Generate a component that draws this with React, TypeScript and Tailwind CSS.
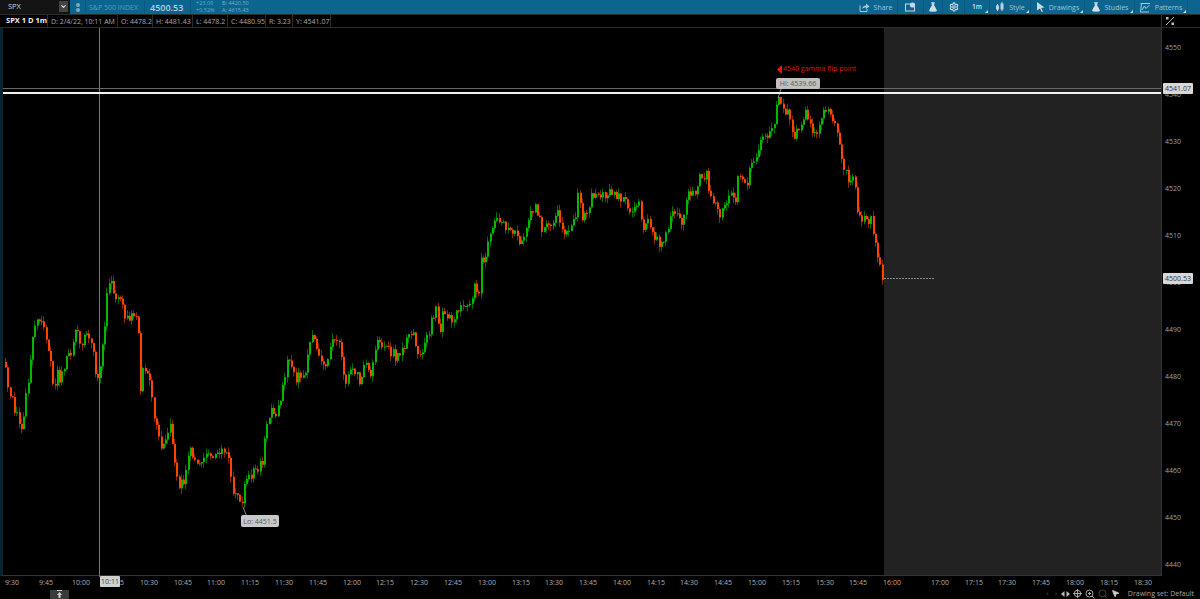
import React from "react";
import { Settings, FlaskConical, ChevronDown, MousePointer2 } from "lucide-react";

const PTS: [number, number][] = [
[5,365],[8,392],[15,410],[20,430],[24,405],[28,375],[32,335],[36,313],[42,325],[46,340],[50,365],[53,390],[57,372],[60,380],[68,350],[72,350],[76,325],[80,345],[86,335],[92,345],[96,385],[100,365],[104,330],[107,290],[110,283],[116,295],[120,295],[125,320],[130,320],[134,310],[138,330],[140,395],[143,368],[148,375],[152,405],[156,430],[160,450],[165,440],[170,425],[174,465],[178,485],[183,480],[190,450],[195,460],[200,465],[205,450],[212,455],[218,448],[224,452],[228,460],[232,495],[237,490],[242,505],[245,480],[250,475],[256,468],[262,460],[266,430],[270,405],[276,415],[283,387],[287,360],[295,377],[303,377],[312,333],[317,357],[323,370],[332,343],[337,335],[345,383],[352,367],[360,383],[365,360],[370,378],[377,337],[387,350],[397,358],[412,327],[418,360],[427,337],[435,308],[440,327],[443,313],[452,322],[455,307],[468,310],[473,288],[479,288],[480,258],[484,267],[488,233],[500,217],[510,235],[513,227],[518,245],[530,215],[535,205],[543,232],[557,215],[566,237],[575,215],[577,187],[581,217],[585,218],[592,195],[605,197],[613,192],[630,210],[638,200],[642,233],[647,222],[659,247],[673,212],[682,222],[689,190],[693,197],[700,173],[707,175],[709,195],[720,213],[730,193],[735,200],[738,175],[747,185],[750,158],[756,160],[760,143],[772,132],[777,102],[781,100],[790,122],[793,140],[805,112],[813,140],[818,123],[825,107],[828,108],[833,118],[840,153],[848,180],[853,177],[857,210],[865,223],[870,217],[875,247],[883,280]];

function interp(x: number) {
  for (let i = 1; i < PTS.length; i++) {
    if (x <= PTS[i][0]) {
      const [a, b] = PTS[i - 1], [c, d] = PTS[i];
      return b + ((d - b) * (x - a)) / (c - a);
    }
  }
  return 280;
}
function rnd(i: number) {
  const s = Math.sin(i * 127.1 + 11.7) * 43758.5453;
  return s - Math.floor(s);
}
const STEP = 2.2538;
const closeAt = (i: number) => interp(5 + i * STEP) + (rnd(i) - 0.5) * 11;
const candles = Array.from({ length: 390 }, (_, i) => {
  const x = 5 + i * STEP;
  const close = i === 389 ? 280 : closeAt(i);
  const prev = i === 0 ? 362 : closeAt(i - 1);
  const hi = Math.max(Math.min(close, prev) - rnd(i + 500) * 6, 97);
  const lo = Math.max(close, prev) + rnd(i + 900) * 6;
  return { x, close: Math.max(close, 97), prev: Math.max(prev, 97), hi, lo, up: close < prev };
});

const PRICES = [4550, 4540, 4530, 4520, 4510, 4500, 4490, 4480, 4470, 4460, 4450, 4440];
const TIMES: [string, number][] = [["9:30",12],["9:45",46],["10:00",81],["10:15",115],["10:30",149],["10:45",183],["11:00",216],["11:15",250],["11:30",284],["11:45",318],["12:00",352],["12:15",385],["12:30",419],["12:45",453],["13:00",487],["13:15",521],["13:30",554],["13:45",588],["14:00",622],["14:15",656],["14:30",689],["14:45",723],["15:00",757],["15:15",791],["15:30",825],["15:45",858],["16:00",892],["17:00",940],["17:15",974],["17:30",1007],["17:45",1041],["18:00",1075],["18:15",1109],["18:30",1143]];
const CELLS = [
  ["D: 2/4/22, 10:11 AM", 70],
  ["O: 4478.2", 35],
  ["H: 4481.43", 40],
  ["L: 4478.2", 35],
  ["C: 4480.95", 38],
  ["R: 3.23", 27],
  ["Y: 4541.07", 38],
] as const;

const Caret = () => <span className="absolute right-[1px] bottom-[1px] h-0 w-0 border-b-[3px] border-l-[3px] border-b-[#c8dbe5] border-l-transparent" />;

const Tool = ({ icon, label, w, caret = true }: { icon: React.ReactNode; label?: string; w: string; caret?: boolean }) => (
  <div className={`relative flex h-full items-center justify-center gap-[4px] border-r border-[#0a5a80] ${w}`}>
    {icon}
    {label && <span>{label}</span>}
    {caret && <Caret />}
  </div>
);

const ShareIcon = () => (
  <svg width="11" height="9" viewBox="0 0 11 9" fill="none" stroke="#a9c7d6" strokeWidth="1"><path d="M1 2.5V8.5H8V6" /><path d="M3 6C3.5 3.5 5.5 2.5 7 2.5V0.5L10.5 3.5L7 6V4.5C5.5 4.5 4 5 3 6Z" fill="#a9c7d6" stroke="none" /></svg>
);
const CalIcon = () => (
  <svg width="11" height="10" viewBox="0 0 11 10" fill="none" stroke="#c4d7e1" strokeWidth="1"><rect x="0.5" y="2" width="9" height="7" /><circle cx="7.5" cy="3" r="2.6" fill="#c4d7e1" stroke="none" /></svg>
);
const StyleIcon = () => (
  <svg width="10" height="10" viewBox="0 0 10 10" fill="#bcd2de"><rect x="1" y="3.5" width="3" height="4" /><rect x="2" y="2" width="1" height="7" /><rect x="5.5" y="1.5" width="3" height="6" /><rect x="6.5" y="0" width="1" height="9" /></svg>
);
const CursorIcon = ({ c = "#c8dbe5" }: { c?: string }) => (
  <svg width="9" height="10" viewBox="0 0 9 10" fill={c}><path d="M1 0L8.5 5.5L5.2 6L7 9.5L5.6 10L4 6.5L1 8.5Z" /></svg>
);
const PatternIcon = () => (
  <svg width="11" height="11" viewBox="0 0 11 11" fill="none" stroke="#bcd2de" strokeWidth="0.9"><path d="M0.5 1.5H10" /><path d="M1.5 1.5L0.5 10.5" /><path d="M2 8L4.5 4L6 6.5L9.5 3" /><path d="M1 10H9" /></svg>
);

export default function App() {
  return (
    <div className="relative flex h-[599px] w-[1200px] flex-col overflow-hidden bg-black text-[7px] leading-none text-[#c4c4c4] [font-family:'Open_Sans',sans-serif]">
      {/* top bar */}
      <div className="flex h-[14px] shrink-0 items-center bg-[#0c658e] text-[#a5c3d2]">
        <div className="relative flex h-full w-[70px] items-center bg-[#141414] pl-[8px] text-[7.5px] text-[#d0d0d0]">
          SPX
          <div className="absolute right-[2px] top-[1px] flex h-[11px] w-[9px] items-center justify-center bg-[#444]">
            <ChevronDown size={7} strokeWidth={4} color="#ddd" />
          </div>
        </div>
        <div className="flex h-full w-[15px] flex-col items-center justify-center gap-[1px]">
          <span className="h-[4px] w-[4px] rounded-full bg-[#7fa9bf]" />
          <span className="h-[4px] w-[4px] rounded-full bg-[#7fa9bf]" />
        </div>
        <div className="flex h-full w-[59px] items-center whitespace-nowrap border-l border-[#0a5a80] pl-[3px] text-[#4f9dbf]">S&amp;P 500 INDEX</div>
        <div className="flex h-full w-[46px] items-center border-l border-[#0a5a80] pl-[5px] text-[9px] font-semibold text-[#b7d0dc]">4500.53</div>
        <div className="flex h-full w-[27px] flex-col justify-center gap-[1px] border-l border-[#0a5a80] pl-[5px] text-[5.5px] text-[#5fb0d0]"><span>+23.09</span><span>+0.52%</span></div>
        <div className="flex h-full flex-col justify-center gap-[1px] pl-[5px] text-[5.5px] text-[#6fb0cc]"><span>B: 4420.50</span><span>A: 4615.43</span></div>
        <div className="flex-1" />
        <div className="flex h-full items-center">
          <Tool w="w-[44px]" icon={<ShareIcon />} label="Share" caret={false} />
          <Tool w="w-[26px]" icon={<CalIcon />} caret={false} />
          <Tool w="w-[19px]" icon={<FlaskConical size={10} color="#cfdfe8" fill="#cfdfe8" />} caret={false} />
          <Tool w="w-[22px]" icon={<Settings size={10} color="#cfdfe8" strokeWidth={2.6} />} caret={false} />
          <Tool w="w-[25px]" icon={<span className="text-[6.5px] font-semibold text-[#d6e4ec]">1m</span>} />
          <Tool w="w-[41px]" icon={<StyleIcon />} label="Style" />
          <Tool w="w-[54px]" icon={<CursorIcon />} label="Drawings" />
          <Tool w="w-[50px]" icon={<FlaskConical size={10} color="#cfdfe8" fill="#cfdfe8" />} label="Studies" />
          <Tool w="w-[53px]" icon={<PatternIcon />} label="Patterns" />
          <div className="w-[12px]" />
        </div>
      </div>

      {/* info row + axis corner */}
      <div className="flex h-[13px] shrink-0 items-center border-t border-[#2c2c2c]">
        <div className="flex h-full w-[47px] items-center whitespace-nowrap pl-[6px] text-[7.5px] font-bold text-[#f0f0f0]">SPX 1 D 1m</div>
        {CELLS.map(([t, w]) => (
          <div key={t} style={{ width: w }} className="flex h-full items-center whitespace-nowrap border-l border-[#2c2c2c] pl-[3px] text-[#a8a8a8]">{t}</div>
        ))}
        <div className="h-full flex-1 border-l border-[#2c2c2c]" />
        <div className="flex h-full w-[39px] items-center border-l border-[#333] pl-[3px]">
          <svg width="10" height="10" viewBox="0 0 10 10" stroke="#bbb" fill="none"><path d="M1 9L9 1" /><rect x="1" y="1" width="2.5" height="2.5" fill="#bbb" stroke="none" /><rect x="6.5" y="6.5" width="2.5" height="2.5" fill="#bbb" stroke="none" /></svg>
        </div>
      </div>

      {/* chart + price axis */}
      <div className="flex h-[549px] shrink-0 border-t border-[#2c2c2c]">
        <div className="relative flex flex-1 border-b border-l-[3px] border-r border-b-[#333] border-l-[#0b2530] border-r-[#333]">
          <div className="w-[881px] bg-black" />
          <div className="flex-1 bg-[#222222]" />
          <svg className="absolute left-[-3px] top-[-28px]" width="1161" height="577" viewBox="0 0 1161 577">
            <rect x="99" y="28" width="1" height="549" fill="#777" />
            {candles.map((c, i) => {
              const top = Math.min(c.close, c.prev);
              const h = Math.max(Math.abs(c.close - c.prev), 1);
              const x = Math.round(c.x);
              return (
                <g key={i}>
                  <rect x={x} y={c.hi} width="1" height={c.lo - c.hi} fill={c.up ? "#006d00" : "#8a2600"} />
                  <rect x={x} y={top} width="2" height={h} fill={c.up ? "#00b800" : "#ff4300"} />
                </g>
              );
            })}
            <line x1="884" y1="278.5" x2="934" y2="278.5" stroke="#8a8a8a" strokeDasharray="2 1" />
            <path d="M781 89L778 98M243 507L247 517" stroke="#888" fill="none" />
            <rect x="3" y="88" width="1158" height="1" fill="#666" />
            <rect x="3" y="92" width="1158" height="2" fill="#f2f2f2" />
            <path d="M782 65V74L777 69.5Z" fill="#e31b00" />
          </svg>
          <span className="absolute left-[780px] top-[37px] whitespace-nowrap text-[#d81c00]">4540 gamma flip point</span>
          <span className="absolute left-[773px] top-[50px] flex h-[11px] w-[44px] items-center justify-center rounded-[2px] bg-[#c0c0c0] text-[#5a5a5a]">Hi: 4539.66</span>
          <span className="absolute left-[238px] top-[487px] flex h-[12px] w-[38px] items-center justify-center rounded-[2px] bg-[#c8c8c8] text-[#5a5a5a]">Lo: 4451.5</span>
        </div>
        <div className="relative w-[38px] shrink-0 text-[#8fa6bd]">
          {PRICES.map((p, i) => (
            <span key={p} style={{ top: 47 - 28 - 3 + i * 47 }} className="absolute left-[3px]">{p}</span>
          ))}
          <span className="absolute left-[1px] top-[55px] flex h-[11px] w-[30px] items-center justify-center rounded-[1px] bg-[#d8d8d8] text-[#333]">4541.07</span>
          <span className="absolute left-[1px] top-[245px] flex h-[11px] w-[30px] items-center justify-center rounded-[1px] bg-[#d8d8d8] text-[#333]">4500.53</span>
        </div>
      </div>

      {/* time axis */}
      <div className="relative h-[22px] flex-1 text-[#b0b0b0]">
        {TIMES.map(([t, x]) => (
          <span key={t} style={{ left: x - 10 }} className={`absolute top-[3px] w-[20px] text-center ${t === "16:00" ? "text-[#d8a070]" : ""}`}>{t}</span>
        ))}
        <span className="absolute left-[100px] top-0 flex h-[11px] w-[20px] items-center justify-center rounded-[1px] bg-[#d0d0d0] text-[#444]">10:11</span>
        <div className="absolute left-[50px] top-[14px] flex h-[9px] w-[19px] items-start justify-center bg-[#3a3a3a]">
          <svg width="7" height="8" viewBox="0 0 7 8" fill="#ccc"><rect x="1" y="0" width="5" height="1" /><path d="M3.5 2L6 5H1Z" /><rect x="2.5" y="5" width="2" height="3" /></svg>
        </div>
        <div className="absolute bottom-0 right-[6px] flex h-[11px] items-center gap-[3px] text-[#a5a5a5]">
          <span className="mr-[4px] text-[5px]">‹</span><span className="mr-[1px] text-[5px]">›</span>
          <svg width="9" height="6" viewBox="0 0 9 6" fill="#bbb"><path d="M0 3L3.5 0V6ZM9 3L5.5 0V6Z" /></svg>
          <svg width="9" height="9" viewBox="0 0 9 9" fill="none" stroke="#aaa"><circle cx="4.5" cy="4.5" r="3.2" /><path d="M4.5 0V9M0 4.5H9" /></svg>
          <svg width="10" height="10" viewBox="0 0 10 10" fill="none" stroke="#aaa"><circle cx="4.5" cy="4.5" r="3.5" /><path d="M7 7L9.5 9.5M3 4.5H6M4.5 3V6" /></svg>
          <svg width="10" height="10" viewBox="0 0 10 10" fill="none" stroke="#444"><circle cx="4.5" cy="4.5" r="3.5" /><path d="M7 7L9.5 9.5" /></svg>
          <MousePointer2 size={9} color="#ccc" fill="#ccc" />
          <span className="ml-[5px] whitespace-nowrap">Drawing set: Default</span>
        </div>
      </div>
    </div>
  );
}
